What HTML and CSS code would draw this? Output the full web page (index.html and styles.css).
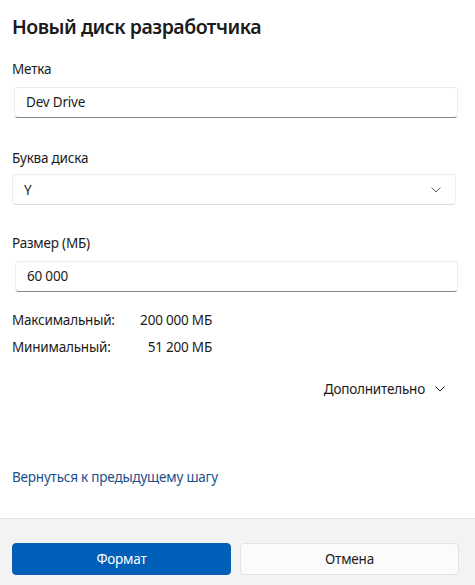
FILE: index.html
```html
<!DOCTYPE html>
<html lang="ru">
<head>
<meta charset="utf-8">
<title>Новый диск разработчика</title>
<link rel="stylesheet" href="styles.css">
</head>
<body>
<div class="dialog">
  <main class="content">
    <h1 class="title">Новый диск разработчика</h1>

    <div class="field field-first">
      <label class="label">Метка</label>
      <div class="input input-label">Dev Drive</div>
    </div>

    <div class="field">
      <label class="label">Буква диска</label>
      <div class="select">
        <span>Y</span>
        <svg class="chev" width="10" height="6" viewBox="0 0 10 6"><path d="M0.8 0.8 L5 5 L9.2 0.8" fill="none" stroke="#5f5f5f" stroke-width="1" stroke-linecap="round" stroke-linejoin="round"/></svg>
      </div>
    </div>

    <div class="field field-size">
      <label class="label">Размер (МБ)</label>
      <div class="input input-size">60 000</div>
    </div>

    <div class="limits">
      <div class="limit-row"><span class="limit-name">Максимальный:</span><span class="limit-val">200 000 МБ</span></div>
      <div class="limit-row"><span class="limit-name">Минимальный:</span><span class="limit-val">51 200 МБ</span></div>
    </div>

    <div class="more">
      <span>Дополнительно</span>
      <svg class="chev" width="10" height="6" viewBox="0 0 10 6"><path d="M0.8 0.8 L5 5 L9.2 0.8" fill="none" stroke="#1b1b1b" stroke-width="1" stroke-linecap="round" stroke-linejoin="round"/></svg>
    </div>

    <a class="back" href="#">Вернуться к предыдущему шагу</a>
  </main>

  <footer class="footer">
    <button class="btn btn-primary">Формат</button>
    <button class="btn btn-secondary">Отмена</button>
  </footer>
</div>
</body>
</html>
```

FILE: styles.css
```css
html, body {
  margin: 0;
  padding: 0;
  background: #ffffff;
}
body {
  font-family: "Noto Sans", "Open Sans", sans-serif;
  color: #1b1b1b;
  width: 475px;
  height: 585px;
  overflow: hidden;
  font-size: 13.5px;
  letter-spacing: -0.2px;
}
.dialog {
  display: flex;
  flex-direction: column;
  height: 585px;
}
.content {
  flex: 1;
  padding: 13px 17px 0 12px;
  display: flex;
  flex-direction: column;
}
.title {
  margin: 0;
  font-size: 19.5px;
  font-weight: 600;
  line-height: 28px;
  letter-spacing: -0.5px;
}
.field {
  display: flex;
  flex-direction: column;
  margin-top: 30px;
}
.field-first { margin-top: 18px; }
.field-size { margin-top: 28px; }
.label {
  line-height: 20px;
  margin-bottom: 8px;
}
.input {
  box-sizing: border-box;
  height: 31px;
  background: #fff;
  border: 1px solid #ececec;
  border-bottom: 1px solid #8a8a8a;
  border-radius: 4px;
  line-height: 29px;
  padding-left: 11px;
}
.input-label { margin-left: 2px; }
.input-size { margin-left: 3px; }
.select {
  box-sizing: border-box;
  height: 31px;
  margin-right: 2px;
  margin-top: -2px;
  background: #fff;
  border: 1px solid #ececec;
  border-bottom-color: #dcdcdc;
  border-radius: 4px;
  padding: 0 14px 0 11px;
  display: flex;
  align-items: center;
  justify-content: space-between;
}
.limits {
  margin-top: 18px;
  display: flex;
  flex-direction: column;
  gap: 7px;
}
.limit-row {
  display: flex;
  line-height: 20px;
  white-space: nowrap;
}
.limit-name { width: 118px; }
.limit-val { width: 82px; text-align: right; }
.more {
  align-self: flex-end;
  margin-top: 22px;
  margin-right: 13px;
  display: flex;
  align-items: center;
  gap: 10px;
  line-height: 20px;
}
.back {
  margin-top: 68px;
  line-height: 20px;
  color: #1c4f8c;
  text-decoration: none;
  align-self: flex-start;
}
.footer {
  height: 67px;
  box-sizing: border-box;
  background: #f3f3f3;
  border-top: 1px solid #e5e5e5;
  display: flex;
  gap: 9px;
  padding: 24px 16px 0 12px;
}
.btn {
  flex: 1;
  height: 32px;
  border-radius: 4px;
  font-family: inherit;
  font-size: 13.5px;
  letter-spacing: -0.2px;
  cursor: pointer;
}
.btn-primary {
  background: #005fb8;
  border: 1px solid #0a5fb0;
  color: #fff;
}
.btn-secondary {
  background: #fbfbfb;
  border: 1px solid #e3e3e3;
  color: #1b1b1b;
}
```
